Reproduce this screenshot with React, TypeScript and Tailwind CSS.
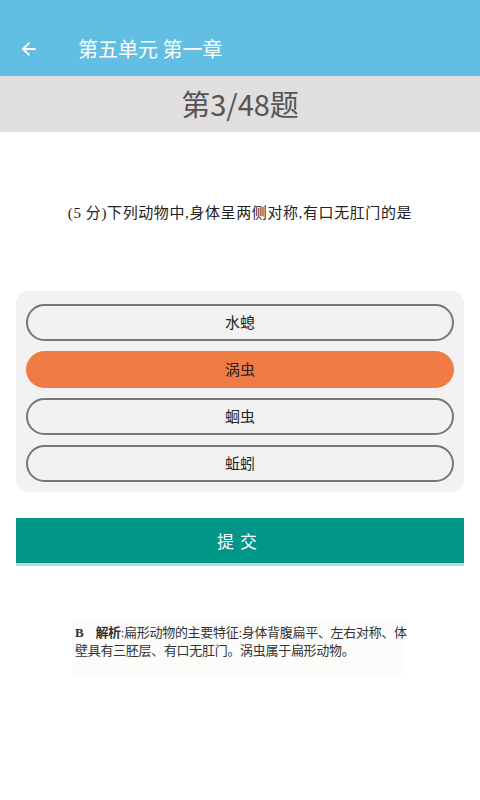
import { ArrowLeft } from "lucide-react";

const options = [
  { id: "A", label: "水螅" },
  { id: "B", label: "涡虫" },
  { id: "C", label: "蛔虫" },
  { id: "D", label: "蚯蚓" },
];

const selected = "B";

export default function App() {
  return (
    <div
      className="min-h-[800px] w-[480px] bg-white"
      style={{ fontFamily: '"Noto Sans CJK SC", "Noto Sans", sans-serif' }}
    >
      {/* toolbar */}
      <header className="flex h-[76px] items-end bg-[#62bee2] pb-[17px] shadow-[0_1px_3px_rgba(0,0,0,0.25)]">
        <button className="ml-[19px] flex h-[20px] w-[20px] items-center justify-center text-white">
          <ArrowLeft size={20} strokeWidth={2.2} />
        </button>
        <h1 className="ml-[39px] text-[20px] leading-[20px] text-white">第五单元 第一章</h1>
      </header>

      <div className="flex h-[56px] items-center justify-center bg-[#e0dfde] pb-[2px]">
        <span className="text-[29px] leading-[36px] text-[#555]">第3/48题</span>
      </div>

      <p
        className="mt-[71px] text-center text-[15px] leading-[20px] tracking-[0.6px] text-[#222]"
        style={{ fontFamily: '"Liberation Serif", "Noto Sans CJK SC", serif' }}
      >
        (5 分)下列动物中,身体呈两侧对称,有口无肛门的是
      </p>

      <section className="mx-[16px] mt-[68px] flex flex-col gap-[10px] rounded-[12px] bg-[#f2f2f2] px-[10px] pb-[10px] pt-[13px]">
        {options.map((o) =>
          o.id === selected ? (
            <div
              key={o.id}
              className="flex h-[37px] items-center justify-center rounded-full bg-[#f07b45] text-[15px] text-[#222]"
            >
              {o.label}
            </div>
          ) : (
            <div
              key={o.id}
              className="flex h-[37px] items-center justify-center rounded-full border-2 border-[#777] text-[15px] text-[#222]"
            >
              {o.label}
            </div>
          )
        )}
      </section>

      <button className="mx-[16px] mt-[26px] flex h-[48px] w-[448px] items-center justify-center border-b-[3px] border-[#b9dcd8] bg-[#009688] text-[17px] tracking-[6px] text-white">
        提交
      </button>

      <div
        className="ml-[72px] mt-[55px] w-[334px] bg-[#fcfcfb] px-[3px] pb-[14px] pt-[3px] text-[13px] leading-[18px] text-[#333]"
        style={{ fontFamily: '"Liberation Serif", "Noto Sans CJK SC", serif' }}
      >
        <div className="whitespace-nowrap tracking-[-0.3px]">
          <span className="font-bold">B</span>
          <span className="ml-[12px] font-bold">解析</span>:扁形动物的主要特征:身体背腹扁平、左右对称、体
        </div>
        <div className="whitespace-nowrap tracking-[-0.3px]">壁具有三胚层、有口无肛门。涡虫属于扁形动物。</div>
      </div>
    </div>
  );
}
